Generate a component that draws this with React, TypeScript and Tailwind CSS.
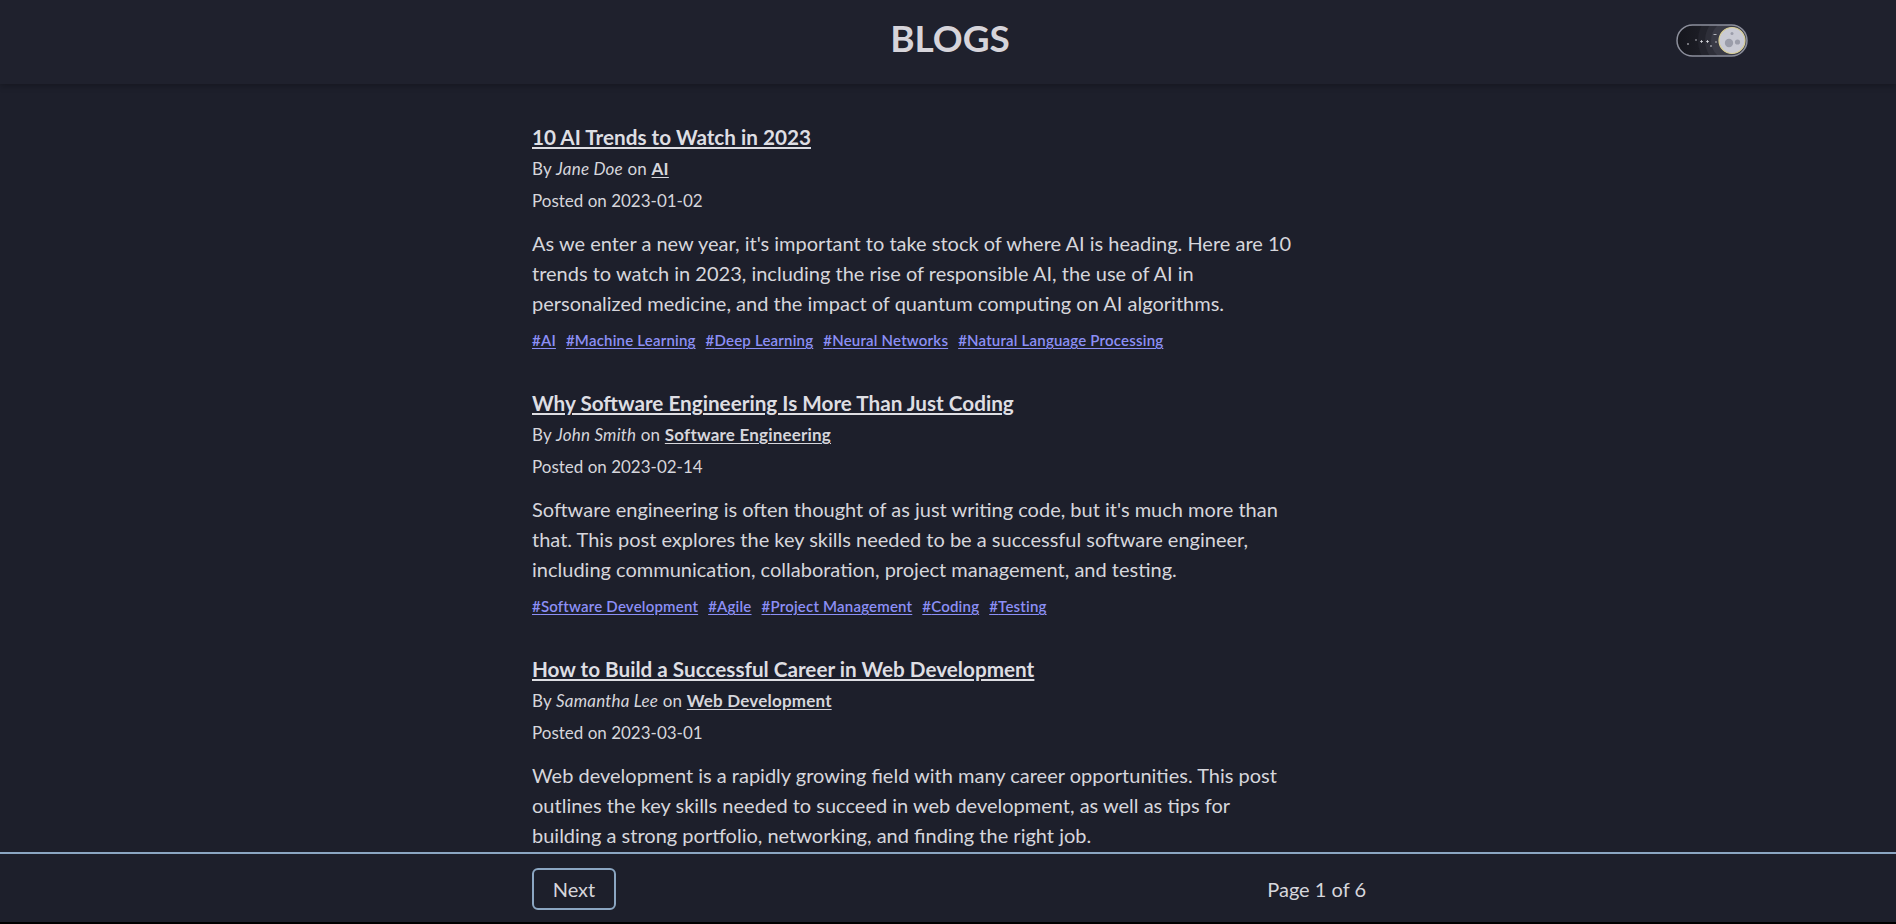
import React from "react"

interface IPost {
  title: string
  author: string
  category: string
  date: string
  body: string
  tags: string[]
}

const posts: IPost[] = [
  {
    title: "10 AI Trends to Watch in 2023",
    author: "Jane Doe",
    category: "AI",
    date: "2023-01-02",
    body: "As we enter a new year, it's important to take stock of where AI is heading. Here are 10 trends to watch in 2023, including the rise of responsible AI, the use of AI in personalized medicine, and the impact of quantum computing on AI algorithms.",
    tags: ["AI", "Machine Learning", "Deep Learning", "Neural Networks", "Natural Language Processing"],
  },
  {
    title: "Why Software Engineering Is More Than Just Coding",
    author: "John Smith",
    category: "Software Engineering",
    date: "2023-02-14",
    body: "Software engineering is often thought of as just writing code, but it's much more than that. This post explores the key skills needed to be a successful software engineer, including communication, collaboration, project management, and testing.",
    tags: ["Software Development", "Agile", "Project Management", "Coding", "Testing"],
  },
  {
    title: "How to Build a Successful Career in Web Development",
    author: "Samantha Lee",
    category: "Web Development",
    date: "2023-03-01",
    body: "Web development is a rapidly growing field with many career opportunities. This post outlines the key skills needed to succeed in web development, as well as tips for building a strong portfolio, networking, and finding the right job.",
    tags: ["Web Development", "Career", "Portfolio", "Networking"],
  },
]

const ThemeToggle = () => (
  <svg width="72" height="33" viewBox="0 0 72 33" fill="none">
    <defs>
      <clipPath id="pill">
        <rect x="1" y="1" width="70" height="31" rx="15.5" />
      </clipPath>
      <linearGradient id="bgpill" x1="0" y1="0" x2="1" y2="0">
        <stop offset="0" stopColor="#15161d" />
        <stop offset="1" stopColor="#2a2b35" />
      </linearGradient>
    </defs>
    <rect x="1" y="1" width="70" height="31" rx="15.5" fill="url(#bgpill)" />
    <g clipPath="url(#pill)">
      <circle cx="56" cy="16.5" r="34" fill="#23242d" />
      <circle cx="56" cy="16.5" r="27" fill="#2e2f39" />
      <circle cx="56" cy="16.5" r="21" fill="#3a3b46" />
    </g>
    <rect x="1" y="1" width="70" height="31" rx="15.5" stroke="#8c8f9c" strokeWidth="1.5" />
    <circle cx="12" cy="20" r="0.8" fill="#e5e7eb" />
    <circle cx="20" cy="16" r="0.7" fill="#e5e7eb" />
    <path d="M24 17.5h3M25.5 16v3" stroke="#e5e7eb" strokeWidth="0.7" />
    <path d="M30 17.5h3M31.5 16v3" stroke="#e5e7eb" strokeWidth="0.7" />
    <circle cx="35" cy="22" r="0.8" fill="#e5e7eb" />
    <path d="M37.5 10.5h3" stroke="#e5e7eb" strokeWidth="0.7" />
    <circle cx="40" cy="18" r="0.7" fill="#e5e7eb" />
    <circle cx="56" cy="16.5" r="13" fill="#c9cad4" stroke="#d9cf95" strokeWidth="1.2" />
    <circle cx="53" cy="19" r="4.2" fill="#9b9daa" />
    <circle cx="61.5" cy="18" r="2.6" fill="#9b9daa" />
    <circle cx="56" cy="9.5" r="1.5" fill="#9b9daa" />
  </svg>
)

const Post = ({ post }: { post: IPost }) => {
  return (
    <article className="text-[#d6d6dc]">
      <h2 className="text-[20.7px] font-bold leading-7 underline underline-offset-2 text-[#dedee3]">
        <a href="#">{post.title}</a>
      </h2>
      <p className="mt-0.5 text-[17px] leading-8 tracking-[0.2px]">
        By <em>{post.author}</em> on{" "}
        <a href="#" className="font-bold underline underline-offset-2">
          {post.category}
        </a>
      </p>
      <p className="text-[17px] leading-8">Posted on {post.date}</p>
      <p className="mt-[11px] max-w-3xl text-[20px] leading-[30px]">{post.body}</p>
      <div className="mt-3 flex flex-wrap gap-x-2.5 text-[15px] leading-5 font-semibold tracking-[0.2px] text-[#8c8ff6]">
        {post.tags.map((tag) => (
          <a key={tag} href="#" className="underline underline-offset-2">
            #{tag}
          </a>
        ))}
      </div>
    </article>
  )
}

const App = () => {
  return (
    <div
      className="flex h-screen flex-col bg-[#1d1f2b] text-[#d6d6dc]"
      style={{ fontFamily: "Lato, 'Noto Sans', sans-serif" }}
    >
      <header className="z-10 h-[84px] shrink-0 bg-[#1f212d] shadow-[0_2px_6px_rgba(0,0,0,0.25)]">
        <div className="mx-auto flex h-full max-w-[1600px] items-center justify-between pb-2">
          <div className="w-[72px]" />
          <h1 className="ml-1 text-[37px] font-bold text-[#d6d4da]">BLOGS</h1>
          <button type="button" className="mt-1 w-[72px]">
            <ThemeToggle />
          </button>
        </div>
      </header>

      <main className="min-h-0 flex-1 overflow-hidden">
        <div className="mx-auto flex max-w-4xl flex-col gap-[39px] px-8 pt-[39px] pb-32">
          {posts.map((post) => (
            <Post key={post.title} post={post} />
          ))}
        </div>
      </main>

      <footer className="h-[72px] shrink-0 border-t-2 border-b-2 border-t-[#8ba6c2] border-b-black bg-[#1d1f2b]">
        <div className="mx-auto flex h-full max-w-[900px] items-center justify-between pr-8 pl-[34px] pt-0.5">
          <button
            type="button"
            className="h-[42px] w-[84px] rounded-md border-2 border-[#8ba6c2] text-[20px] text-[#d6d6dc]"
          >
            Next
          </button>
          <span className="text-[20px] text-[#d6d6dc]">Page 1 of 6</span>
        </div>
      </footer>
    </div>
  )
}

export default App
